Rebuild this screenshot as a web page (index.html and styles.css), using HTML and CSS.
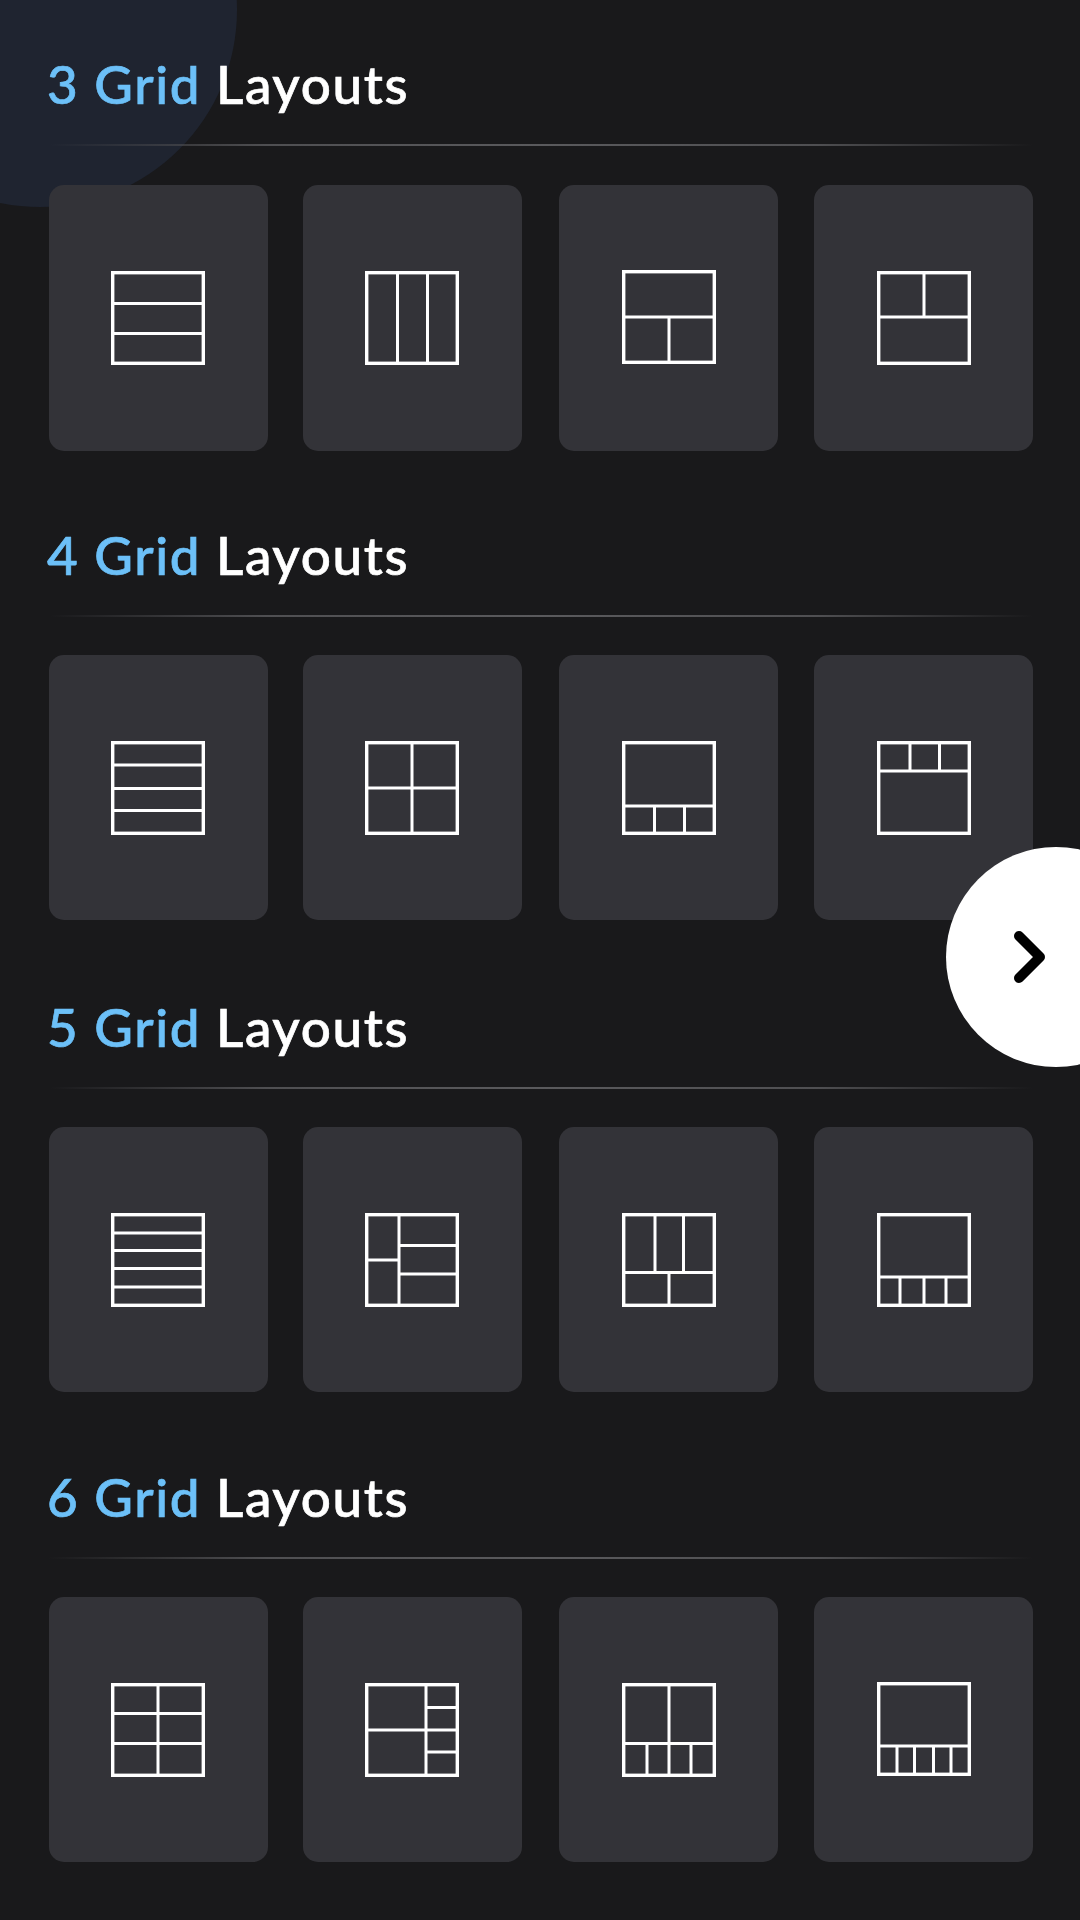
FILE: index.html
```html
<!DOCTYPE html>
<html lang="en">
<head>
<meta charset="utf-8">
<title>Grid Layouts</title>
<link rel="stylesheet" href="styles.css">
</head>
<body>
<div class="glow"></div>
<main class="page">
  <section class="section section--a">
    <h2 class="title"><span class="accent">3 Grid</span> Layouts</h2>
    <div class="rule"></div>
    <div class="cards">
      <div class="card"><svg class="icon" viewBox="0 0 94 94"><rect class="frame" x="1.7" y="1.7" width="90.6" height="90.6"/><path class="div" d="M2 32.5H92M2 62.5H92"/></svg></div>
      <div class="card"><svg class="icon" viewBox="0 0 94 94"><rect class="frame" x="1.7" y="1.7" width="90.6" height="90.6"/><path class="div" d="M32.5 2V92M62.5 2V92"/></svg></div>
      <div class="card"><svg class="icon icon--up" viewBox="0 0 94 94"><rect class="frame" x="1.7" y="1.7" width="90.6" height="90.6"/><path class="div" d="M2 47H92M47 47V92"/></svg></div>
      <div class="card"><svg class="icon" viewBox="0 0 94 94"><rect class="frame" x="1.7" y="1.7" width="90.6" height="90.6"/><path class="div" d="M2 46H92M47 2V46"/></svg></div>
    </div>
  </section>
  <section class="section section--b">
    <h2 class="title"><span class="accent">4 Grid</span> Layouts</h2>
    <div class="rule"></div>
    <div class="cards">
      <div class="card"><svg class="icon" viewBox="0 0 94 94"><rect class="frame" x="1.7" y="1.7" width="90.6" height="90.6"/><path class="div" d="M2 24H92M2 47.5H92M2 69.5H92"/></svg></div>
      <div class="card"><svg class="icon" viewBox="0 0 94 94"><rect class="frame" x="1.7" y="1.7" width="90.6" height="90.6"/><path class="div" d="M2 47H92M47 2V92"/></svg></div>
      <div class="card"><svg class="icon" viewBox="0 0 94 94"><rect class="frame" x="1.7" y="1.7" width="90.6" height="90.6"/><path class="div" d="M2 65H92M32.5 65V92M62.5 65V92"/></svg></div>
      <div class="card"><svg class="icon" viewBox="0 0 94 94"><rect class="frame" x="1.7" y="1.7" width="90.6" height="90.6"/><path class="div" d="M2 30H92M33 2V30M62.5 2V30"/></svg></div>
    </div>
  </section>
  <section class="section section--c">
    <h2 class="title"><span class="accent">5 Grid</span> Layouts</h2>
    <div class="rule"></div>
    <div class="cards">
      <div class="card"><svg class="icon" viewBox="0 0 94 94"><rect class="frame" x="1.7" y="1.7" width="90.6" height="90.6"/><path class="div" d="M2 20H92M2 37.5H92M2 55.5H92M2 74H92"/></svg></div>
      <div class="card"><svg class="icon" viewBox="0 0 94 94"><rect class="frame" x="1.7" y="1.7" width="90.6" height="90.6"/><path class="div" d="M34 2V92M2 47H34M34 32.5H92M34 61H92"/></svg></div>
      <div class="card"><svg class="icon" viewBox="0 0 94 94"><rect class="frame" x="1.7" y="1.7" width="90.6" height="90.6"/><path class="div" d="M2 59.5H92M33 2V59.5M61.5 2V59.5M47 59.5V92"/></svg></div>
      <div class="card"><svg class="icon" viewBox="0 0 94 94"><rect class="frame" x="1.7" y="1.7" width="90.6" height="90.6"/><path class="div" d="M2 64H92M23 64V92M47 64V92M69 64V92"/></svg></div>
    </div>
  </section>
  <section class="section section--d">
    <h2 class="title"><span class="accent">6 Grid</span> Layouts</h2>
    <div class="rule"></div>
    <div class="cards">
      <div class="card"><svg class="icon" viewBox="0 0 94 94"><rect class="frame" x="1.7" y="1.7" width="90.6" height="90.6"/><path class="div" d="M47 2V92M2 30.5H92M2 60.5H92"/></svg></div>
      <div class="card"><svg class="icon" viewBox="0 0 94 94"><rect class="frame" x="1.7" y="1.7" width="90.6" height="90.6"/><path class="div" d="M61 2V92M2 47H92M61 24.5H92M61 69H92"/></svg></div>
      <div class="card"><svg class="icon" viewBox="0 0 94 94"><rect class="frame" x="1.7" y="1.7" width="90.6" height="90.6"/><path class="div" d="M47 2V92M2 60.5H92M25 60.5V92M69 60.5V92"/></svg></div>
      <div class="card"><svg class="icon icon--up" viewBox="0 0 94 94"><rect class="frame" x="1.7" y="1.7" width="90.6" height="90.6"/><path class="div" d="M2 64H92M20 64V92M37.5 64V92M56.5 64V92M74 64V92"/></svg></div>
    </div>
  </section>
</main>
<button class="next" type="button" aria-label="Next">
  <svg class="chevron" viewBox="0 0 40 60"><path d="M9 9L30 30L9 51"/></svg>
</button>
</body>
</html>
```
FILE: styles.css
```css
* { box-sizing: border-box; }
html, body { margin: 0; height: 100%; }
body {
  position: relative;
  width: 1080px;
  height: 1920px;
  overflow: hidden;
  background: #19191b;
  font-family: "Lato", "Open Sans", sans-serif;
}
.glow {
  position: absolute;
  left: -157px;
  top: -187px;
  width: 394px;
  height: 394px;
  border-radius: 50%;
  background: #1f2430;
}
.page {
  position: relative;
  display: grid;
  grid-template-rows: 471px 472px 470px 1fr;
  height: 100%;
  padding: 64px 47px 0 49px;
}
.section { display: flex; flex-direction: column; }
.title {
  margin: 0 0 0 -2px;
  height: 80px;
  line-height: 40px;
  font-size: 53px;
  font-weight: 500;
  letter-spacing: 1.6px;
  -webkit-text-stroke: 0.7px currentColor;
  color: #fff;
  white-space: nowrap;
}
.accent { color: #6cc0f8; }
.rule {
  height: 2px;
  margin-bottom: 38px;
  background: linear-gradient(90deg, rgba(90,90,93,0) 0%, #4f4f52 22%, #5a5a5d 50%, #4f4f52 78%, rgba(90,90,93,0) 100%);
}
.section--a .rule { margin-bottom: 39px; }
.cards {
  display: grid;
  grid-template-columns: repeat(4, 219px);
  column-gap: 36px;
}
.card {
  display: flex;
  align-items: center;
  justify-content: center;
  height: 265px;
  border-radius: 15px;
  background: #333338;
}
.card:nth-child(2) { margin: 0 1px 0 -1px; }
.section--a .card { height: 266px; }
.icon {
  display: block;
  width: 94px;
  height: 94px;
  overflow: visible;
}
.card:nth-child(-n+2) .icon { margin-right: 1px; }
.icon--up { margin-top: -2px; }
.section--c .icon { margin-top: 1px; }
.section--d .icon { margin-top: 1px; }
.section--d .icon--up { margin-top: -1px; }
.frame { fill: none; stroke: #fff; stroke-width: 3.4; }
.div { fill: none; stroke: #fff; stroke-width: 3; }
.next {
  position: absolute;
  left: 946px;
  top: 847px;
  display: flex;
  align-items: center;
  padding: 0 0 0 64px;
  width: 220px;
  height: 220px;
  border: 0;
  border-radius: 50%;
  background: #fff;
}
.chevron { display: block; width: 40px; height: 60px; }
.chevron path {
  fill: none;
  stroke: #000;
  stroke-width: 10;
  stroke-linecap: round;
  stroke-linejoin: round;
}
```
